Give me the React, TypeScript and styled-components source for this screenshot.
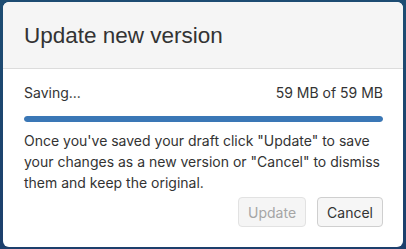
import * as React from 'react'
import styled, { createGlobalStyle } from 'styled-components'

const Global = createGlobalStyle`
  html, body {
    margin: 0;
    padding: 0;
    background: #1c4a6f;
  }
  body {
    font-family: Inter, 'Liberation Sans', Arial, sans-serif;
    color: #333;
  }
`

const Backdrop = styled('div')`
  box-sizing: border-box;
  height: 249px;
  padding: 2px 3px 2px 3px;
  background: linear-gradient(#1d4c72, #1d3f6c);
`

const Modal = styled('section')`
  height: 245px;
  background: #fff;
  border-radius: 6px;
  overflow: hidden;
  display: flex;
  flex-flow: column;
`

const Header = styled('header')`
  flex: 0 0 auto;
  height: 67px;
  box-sizing: border-box;
  background: #f5f5f5;
  border-bottom: 1px solid #dcdcdc;
  padding: 0 21px;
  display: flex;
  align-items: center;
`

const Title = styled('h1')`
  margin: 2px 0 0;
  font-family: 'Liberation Sans', Arial, sans-serif;
  font-size: 22.5px;
  font-weight: 400;
  color: #333;
`

const Body = styled('div')`
  padding: 14px 20px 0 21px;
  font-size: 14px;
`

const StatusRow = styled('div')`
  display: flex;
  justify-content: space-between;
  line-height: 20px;
`

const Track = styled('div')`
  margin-top: 13px;
  height: 6px;
  border-radius: 3px;
  background: #e8e8e8;
  overflow: hidden;
`

const Fill = styled('div')`
  height: 100%;
  border-radius: 3px;
  background: #3a77b6;
`

const Text = styled('p')`
  margin: 8px 0 0;
  line-height: 21px;
`

const Footer = styled('footer')`
  display: flex;
  justify-content: flex-end;
  gap: 11px;
  margin-top: 4px;
`

const Button = styled('button')<{ $disabled?: boolean }>`
  height: 30px;
  padding: 0 9px;
  font-family: inherit;
  font-size: 14px;
  border-radius: 4px;
  border: 1px solid ${p => (p.$disabled ? '#e2e2e2' : '#cfcfcf')};
  background: ${p => (p.$disabled ? '#f5f5f5' : '#f6f6f6')};
  color: ${p => (p.$disabled ? '#a5a5a5' : '#333')};
`

const App: React.FunctionComponent = () => {
  const saved = 59
  const total = 59
  return (
    <Backdrop>
      <Global />
      <Modal>
        <Header>
          <Title>Update new version</Title>
        </Header>
        <Body>
          <StatusRow>
            <span>Saving...</span>
            <span>
              {saved} MB of {total} MB
            </span>
          </StatusRow>
          <Track>
            <Fill style={{ width: `${(saved / total) * 100}%` }} />
          </Track>
          <Text>
            Once you've saved your draft click "Update" to save your changes as a new version or
            "Cancel" to dismiss them and keep the original.
          </Text>
          <Footer>
            <Button $disabled disabled>
              Update
            </Button>
            <Button>Cancel</Button>
          </Footer>
        </Body>
      </Modal>
    </Backdrop>
  )
}

export default App
